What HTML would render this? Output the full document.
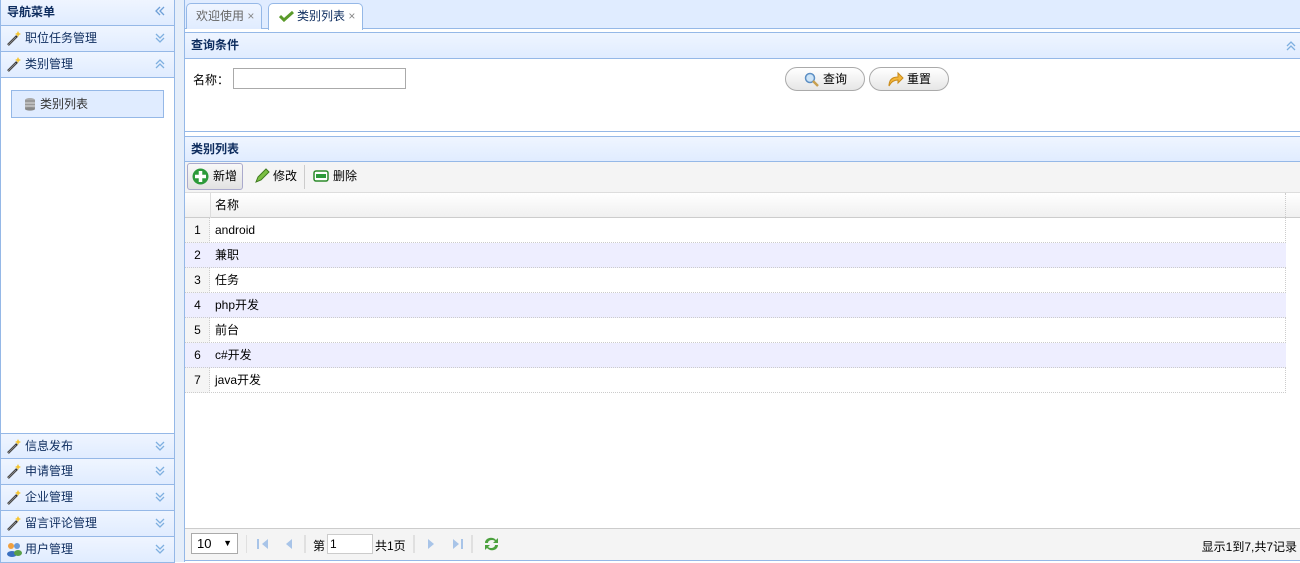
<!DOCTYPE html>
<html><head><meta charset="utf-8"><style>
*{box-sizing:border-box;margin:0;padding:0}
body{width:1300px;height:562px;overflow:hidden;background:#fff;font:12px "Liberation Sans","Noto Sans CJK SC",sans-serif;color:#000;position:relative}
.a{position:absolute}
.hd{background:linear-gradient(#eff5ff,#e0ecff);border:1px solid #95b8e7}
.t{font-weight:bold;color:#0e2d5f}
.acc{left:0;width:175px;height:26px;border:1px solid #95b8e7;border-top:none;background:linear-gradient(#eff5ff,#e0ecff);padding-left:24px;line-height:25px;font-size:12px;color:#0e2d5f}
.chev{position:absolute;right:8px;top:6px;width:12px;height:12px}
.wand{position:absolute;left:5px;top:4px}
.row{position:absolute;left:185px;width:1101px;height:25px;border-bottom:1px dotted #ccc;line-height:24px}
.row .n{position:absolute;left:0;width:25px;text-align:center;color:#000}
.row .v{position:absolute;left:30px}
.alt{background:#eeeeff}
</style></head><body>
<!-- left -->
<div class="a" style="left:175px;top:0;width:9px;height:562px;background:#e5eefa"></div>
<div class="a" style="left:0;top:0;width:175px;height:562px;border:1px solid #95b8e7;border-top:none"></div>
<div class="a hd t" style="left:0;top:0;width:175px;height:26px;border-top:none;line-height:24px;padding-left:6px">导航菜单
<svg class="chev" style="top:5px" viewBox="0 0 12 12"><path d="M6 2L2 6l4 4M10 2L6 6l4 4" fill="none" stroke="#6fa0d8" stroke-width="1.3"/></svg></div>
<svg width="0" height="0" style="position:absolute"><defs>
<symbol id="w" viewBox="0 0 16 16"><path d="M2 15L11 6" stroke="#333" stroke-width="2.5"/><path d="M2 15L10 7" stroke="#888" stroke-width="1"/><path d="M12 1l1 2 2 1-2 1-1 2-1-2-2-1 2-1z" fill="#f5c531"/></symbol>
<symbol id="dn" viewBox="0 0 12 12"><path d="M2 2l4 4 4-4M2 6l4 4 4-4" fill="none" stroke="#7fb0e0" stroke-width="1.3"/></symbol>
<symbol id="up" viewBox="0 0 12 12"><path d="M2 6l4-4 4 4M2 10l4-4 4 4" fill="none" stroke="#7fb0e0" stroke-width="1.3"/></symbol>
</defs></svg>
<div class="a acc" style="top:26px"><svg class="wand" width="16" height="16"><use href="#w"/></svg>职位任务管理<svg class="chev"><use href="#dn"/></svg></div>
<div class="a acc" style="top:52px"><svg class="wand" width="16" height="16"><use href="#w"/></svg>类别管理<svg class="chev"><use href="#up"/></svg></div>
<div class="a" style="left:11px;top:90px;width:153px;height:28px;background:#e0ecff;border:1px solid #95b8e7;line-height:26px;padding-left:28px;color:#333">
<svg class="a" style="left:10px;top:6px" width="14" height="14" viewBox="0 0 14 14"><ellipse cx="8" cy="3" rx="5" ry="2" fill="#aaa"/><rect x="3" y="3" width="10" height="9" fill="#999"/><path d="M3 6h10M3 9h10" stroke="#ddd"/><ellipse cx="8" cy="12" rx="5" ry="1.6" fill="#888"/></svg>类别列表</div>
<div class="a acc" style="top:433px;border-top:1px solid #95b8e7"><svg class="wand" width="16" height="16"><use href="#w"/></svg>信息发布<svg class="chev"><use href="#dn"/></svg></div>
<div class="a acc" style="top:459px"><svg class="wand" width="16" height="16"><use href="#w"/></svg>申请管理<svg class="chev"><use href="#dn"/></svg></div>
<div class="a acc" style="top:485px"><svg class="wand" width="16" height="16"><use href="#w"/></svg>企业管理<svg class="chev"><use href="#dn"/></svg></div>
<div class="a acc" style="top:511px"><svg class="wand" width="16" height="16"><use href="#w"/></svg>留言评论管理<svg class="chev"><use href="#dn"/></svg></div>
<div class="a acc" style="top:537px"><svg class="wand" width="16" height="16" viewBox="0 0 16 16"><circle cx="5" cy="5" r="3" fill="#f0a040"/><circle cx="11" cy="5" r="3" fill="#6a9ad8"/><ellipse cx="6" cy="13" rx="5" ry="3" fill="#3a70c0"/><ellipse cx="12" cy="12" rx="4" ry="3" fill="#5aa04a"/></svg>用户管理<svg class="chev"><use href="#dn"/></svg></div>

<!-- tabs -->
<div class="a" style="left:184px;top:0;width:1126px;height:29px;background:#e0ecff;border-left:1px solid #95b8e7;border-bottom:1px solid #95b8e7"></div>
<div class="a" style="left:186px;top:3px;width:76px;height:26px;background:linear-gradient(#eff5ff,#e0ecff);border:1px solid #95b8e7;border-bottom:none;border-radius:5px 5px 0 0;line-height:24px;padding-left:9px;color:#666">欢迎使用 <span style="color:#888">×</span></div>
<div class="a" style="left:268px;top:3px;width:95px;height:27px;background:#fff;border:1px solid #95b8e7;border-bottom:none;border-radius:5px 5px 0 0;line-height:24px;padding-left:28px;color:#0e2d5f">
<svg class="a" style="left:10px;top:6px" width="16" height="12" viewBox="0 0 16 12"><path d="M1 6l4 4 9-8" fill="none" stroke="#5a9a2a" stroke-width="3"/></svg>类别列表 <span style="color:#888">×</span></div>
<div class="a" style="left:184px;top:29px;width:1126px;height:533px;border-left:1px solid #95b8e7"></div>

<!-- query -->
<div class="a hd t" style="left:184px;top:32px;width:1126px;height:27px;line-height:25px;padding-left:6px">查询条件<svg class="a" style="left:1100px;top:7px;width:12px;height:12px"><use href="#up"/></svg></div>
<div class="a" style="left:184px;top:58px;width:1126px;height:74px;border:1px solid #95b8e7;border-top:none"></div>
<div class="a" style="left:193px;top:71px">名称：</div>
<div class="a" style="left:233px;top:68px;width:173px;height:21px;border:1px solid #aaa"></div>
<div class="a" style="left:785px;top:67px;width:80px;height:24px;border:1px solid #aaa;border-radius:12px;background:linear-gradient(#fff,#e6e6e6);line-height:22px;padding-left:37px">查询
<svg class="a" style="left:18px;top:4px" width="16" height="16" viewBox="0 0 16 16"><circle cx="6" cy="6" r="4.5" fill="#cde4f7" stroke="#5d8fc4" stroke-width="1.5"/><path d="M9 9l5 5" stroke="#c8a050" stroke-width="2.5"/></svg></div>
<div class="a" style="left:869px;top:67px;width:80px;height:24px;border:1px solid #aaa;border-radius:12px;background:linear-gradient(#fff,#e6e6e6);line-height:22px;padding-left:37px">重置
<svg class="a" style="left:17px;top:3px" width="17" height="16" viewBox="0 0 17 16"><path d="M2 15C2 8 6 6 11 6V2l5 5-5 5V9C7 9 4 11 2 15z" fill="#f3b63b" stroke="#c98a1a"/></svg></div>

<!-- list panel -->
<div class="a hd t" style="left:184px;top:136px;width:1126px;height:26px;line-height:24px;padding-left:6px">类别列表</div>
<div class="a" style="left:184px;top:161px;width:1126px;height:400px;border:1px solid #95b8e7;border-top:none"></div>
<div class="a" style="left:185px;top:162px;width:1125px;height:31px;background:#f4f4f4;border-bottom:1px solid #ddd"></div>
<div class="a" style="left:187px;top:163px;width:56px;height:27px;border:1px solid #aac;border-radius:3px;background:linear-gradient(#f8f8f8,#e2e2e2);line-height:25px;padding-left:25px">新增
<svg class="a" style="left:4px;top:4px" width="17" height="17" viewBox="0 0 17 17"><circle cx="8.5" cy="8.5" r="8" fill="#2c9a3a"/><path d="M8.5 3v11M3 8.5h11" stroke="#fff" stroke-width="3.5"/></svg></div>
<div class="a" style="left:253px;top:168px;line-height:16px;padding-left:20px">修改
<svg class="a" style="left:1px;top:0" width="16" height="16" viewBox="0 0 16 16"><path d="M2 14l2-5 8-8 3 3-8 8z" fill="#7bc043" stroke="#3e7a1e"/></svg></div>
<div class="a" style="left:304px;top:165px;width:1px;height:24px;background:#ccc"></div>
<div class="a" style="left:313px;top:168px;line-height:16px;padding-left:20px">删除
<svg class="a" style="left:0;top:2px" width="16" height="12" viewBox="0 0 16 12"><rect x="1" y="1" width="14" height="10" rx="2" fill="#fff" stroke="#2c8a2a" stroke-width="1.5"/><rect x="3" y="4" width="10" height="4" fill="#2c9a3a"/></svg></div>
<div class="a" style="left:185px;top:193px;width:1125px;height:25px;background:linear-gradient(#fff,#f0f0f0);border-bottom:1px solid #ccc;line-height:24px"><span style="position:absolute;left:30px">名称</span></div>
<div class="a" style="left:210px;top:193px;width:1px;height:25px;background:#ddd"></div>
<div class="a" style="left:1285px;top:193px;width:0;height:200px;border-left:1px dotted #ccc"></div>
<div class="a" style="left:185px;top:218px;width:25px;height:175px;background:#f5f5f5;border-right:1px dotted #ccc"></div>
<div class="row" style="top:218px"><span class="n">1</span><span class="v">android</span></div>
<div class="row alt" style="top:243px"><span class="n">2</span><span class="v">兼职</span></div>
<div class="row" style="top:268px"><span class="n">3</span><span class="v">任务</span></div>
<div class="row alt" style="top:293px"><span class="n">4</span><span class="v">php开发</span></div>
<div class="row" style="top:318px"><span class="n">5</span><span class="v">前台</span></div>
<div class="row alt" style="top:343px"><span class="n">6</span><span class="v">c#开发</span></div>
<div class="row" style="top:368px"><span class="n">7</span><span class="v">java开发</span></div>

<!-- pager -->
<div class="a" style="left:185px;top:528px;width:1125px;height:32px;background:#f4f4f4;border-top:1px solid #ccc"></div>
<div class="a" style="left:191px;top:533px;width:47px;height:21px;border:1px solid #aaa;background:#fff;line-height:19px;padding-left:5px;font-size:13px">10<span style="position:absolute;right:5px;font-size:9px">▼</span></div>
<svg class="a" style="left:246px;top:533px" width="260" height="22">
<path d="M0 2v18" stroke="#ccc"/>
<path d="M12 6v10" stroke="#a8c4e8" stroke-width="2"/><path d="M22 6l-6 5 6 5z" fill="#a8c4e8"/>
<path d="M46 6l-6 5 6 5z" fill="#a8c4e8"/>
<path d="M59 2v18" stroke="#ccc"/>
<path d="M168 2v18" stroke="#ccc"/>
<path d="M182 6l6 5-6 5z" fill="#a8c4e8"/>
<path d="M207 6l6 5-6 5z" fill="#a8c4e8"/><path d="M216 6v10" stroke="#a8c4e8" stroke-width="2"/>
<path d="M226 2v18" stroke="#ccc"/>
<path d="M239 10a6 5 0 0 1 11-3l2-2v5h-5l2-2a4 3 0 0 0-7 2z M252 12a6 5 0 0 1-11 3l-2 2v-5h5l-2 2a4 3 0 0 0 7-2z" fill="#4ca13e"/>
</svg>
<div class="a" style="left:313px;top:537px">第</div>
<div class="a" style="left:327px;top:534px;width:46px;height:20px;border:1px solid #ccc;background:#fff;line-height:18px;padding-left:2px">1</div>
<div class="a" style="left:375px;top:537px">共1页</div>
<div class="a" style="right:3px;top:538px">显示1到7,共7记录</div>
</body></html>
